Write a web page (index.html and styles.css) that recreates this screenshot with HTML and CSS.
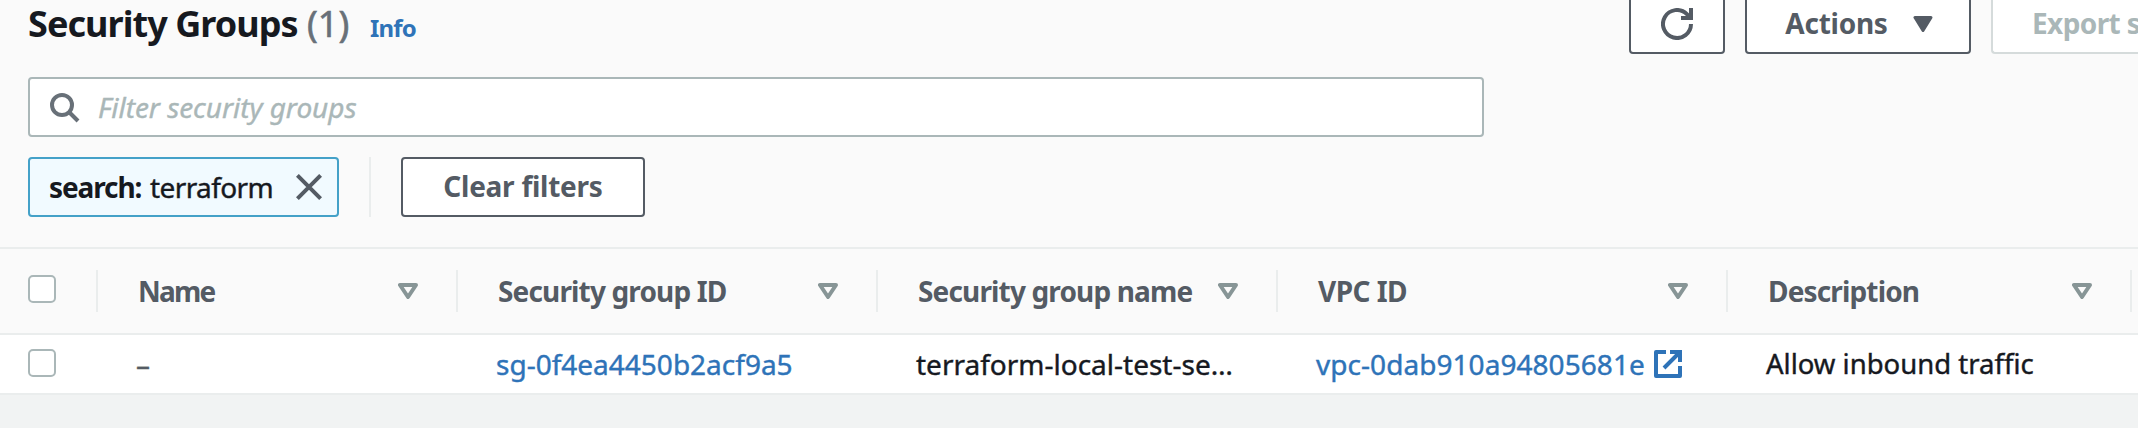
FILE: index.html
```html
<!DOCTYPE html>
<html lang="en">
<head>
<meta charset="utf-8">
<title>Security Groups</title>
<link rel="stylesheet" href="styles.css">
</head>
<body>
<svg class="defs" aria-hidden="true">
  <symbol id="caret" viewBox="0 0 20 16"><path d="M2 2H18L10 14Z" fill="none" stroke="currentColor" stroke-width="4" stroke-linejoin="round"/></symbol>
</svg>
<section class="panel">
  <header class="toolbar">
    <div class="heading">
      <h1 class="title">Security Groups</h1>
      <span class="count">(1)</span>
      <a class="info">Info</a>
    </div>
    <div class="actions">
      <button class="btn btn-refresh" aria-label="Refresh">
        <svg width="32" height="32" viewBox="0 0 32 32" fill="none" stroke="currentColor" stroke-width="4"><path d="M30 16A14 14 0 1 1 25.900 6.100L29 9.500"/><path d="M30 0V10H20"/></svg>
      </button>
      <button class="btn btn-actions"><span class="label-actions">Actions</span>
        <svg width="20" height="16" viewBox="0 0 20 16"><path d="M2 1.500H18L10 14.500Z" fill="currentColor" stroke="currentColor" stroke-width="3" stroke-linejoin="round"/></svg>
      </button>
      <button class="btn btn-export" disabled>Export s</button>
    </div>
  </header>
  <div class="search">
    <svg width="30" height="30" viewBox="0 0 30 30" fill="none" stroke="currentColor" stroke-width="4"><circle cx="12" cy="12" r="10"/><path d="M19 19L28 28"/></svg>
    <span class="placeholder">Filter security groups</span>
  </div>
  <div class="filters">
    <div class="token">
      <b class="token-key">search:</b><span class="token-value">terraform</span>
      <svg width="26" height="26" viewBox="0 0 26 26" fill="none" stroke="currentColor" stroke-width="4"><path d="M1.400 1.400L24.600 24.600M24.600 1.400L1.400 24.600"/></svg>
    </div>
    <div class="separator"></div>
    <button class="btn btn-clear">Clear filters</button>
  </div>
  <div class="row head">
    <div class="cell select"><span class="checkbox"></span></div>
    <div class="cell"><span class="name">Name</span><svg class="caret"><use href="#caret"/></svg></div>
    <div class="cell"><span>Security group ID</span><svg class="caret"><use href="#caret"/></svg></div>
    <div class="cell"><span>Security group name</span><svg class="caret"><use href="#caret"/></svg></div>
    <div class="cell"><span class="vpc">VPC ID</span><svg class="caret"><use href="#caret"/></svg></div>
    <div class="cell"><span>Description</span><svg class="caret"><use href="#caret"/></svg></div>
  </div>
  <div class="row body">
    <div class="cell select"><span class="checkbox"></span></div>
    <div class="cell dash">–</div>
    <div class="cell"><a class="link">sg-0f4ea4450b2acf9a5</a></div>
    <div class="cell">terraform-local-test-se…</div>
    <div class="cell"><a class="link vpc-link">vpc-0dab910a94805681e</a>
      <svg class="external" width="28" height="28" viewBox="0 0 28 28" fill="none" stroke="currentColor" stroke-width="4"><path d="M12 2H2V26H26V16" stroke-linejoin="round"/><path d="M16 2H26V12M25.500 2.500L10 18"/></svg>
    </div>
    <div class="cell description">Allow inbound traffic</div>
  </div>
</section>
</body>
</html>
```
FILE: styles.css
```css
* { box-sizing: border-box; }

body {
  margin: 0;
  height: 428px;
  overflow: hidden;
  background: #f1f3f3;
  color: #16191f;
  font: 28px/40px "Noto Sans", sans-serif;
}

svg { display: block; flex: none; }
.defs { display: none; }

.panel { background: #fafafa; }

.toolbar {
  display: flex;
  justify-content: space-between;
  height: 77px;
  padding-left: 28px;
}

.heading { display: flex; align-items: baseline; height: 48px; line-height: 48px; }
.title { width: 279px; margin: 0; font-size: 36px; font-weight: 700; letter-spacing: -0.95px; white-space: nowrap; }
.count { width: 63px; color: #687078; font-size: 36px; -webkit-text-stroke: 0.6px; }
.info { color: #2e73b8; font-size: 24px; font-weight: 700; letter-spacing: -0.8px; }

.actions { display: flex; gap: 20px; width: 509px; height: 60px; margin-top: -6px; }

.btn {
  display: flex;
  flex: none;
  align-items: center;
  justify-content: center;
  height: 60px;
  padding: 0 0 2px;
  border: 2px solid #545b64;
  border-radius: 4px;
  background: #fff;
  color: #545b64;
  font: 700 28px/40px "Noto Sans", sans-serif;
  letter-spacing: -0.25px;
  white-space: nowrap;
}

.btn-refresh { width: 96px; padding: 0; }
.btn-actions { width: 226px; padding: 0 0 2px 2px; gap: 25px; }
.btn-actions svg { margin-top: 2px; }
.btn-export {
  width: 147px;
  justify-content: flex-start;
  padding-left: 39px;
  border-color: #d5dbdb;
  border-right: 0;
  border-radius: 4px 0 0 4px;
  color: #aab7b8;
  letter-spacing: -0.6px;
}
.btn-clear { width: 244px; }

.search {
  display: flex;
  align-items: center;
  width: 1456px;
  height: 60px;
  margin-left: 28px;
  padding-left: 20px;
  gap: 18px;
  border: 2px solid #aab7b8;
  border-radius: 4px;
  background: #fff;
  color: #687078;
}
.search svg { margin-top: 1px; }
.placeholder { color: #aab7b8; font-style: italic; letter-spacing: -0.05px; -webkit-text-stroke: 0.4px; }

.filters { display: flex; padding: 20px 28px 30px; }
.token {
  display: flex;
  align-items: center;
  width: 311px;
  height: 60px;
  padding: 0 15px 0 19px;
  border: 2px solid #44a1c8;
  border-radius: 4px;
  background: #f1faff;
}
.token-key { width: 101px; letter-spacing: -1.1px; }
.token-value { letter-spacing: -0.6px; -webkit-text-stroke: 0.4px; }
.token svg { margin-left: auto; color: #545b64; }
.separator { width: 2px; margin: 0 30px; background: #eaeded; }

.row { display: grid; grid-template-columns: 98px 360px 420px 400px 450px 404px 1fr; }
.cell { display: flex; align-items: center; min-width: 0; white-space: nowrap; }
.checkbox { width: 28px; height: 28px; border: 2px solid #aab7b8; border-radius: 5px; background: #fff; }
.select { padding-left: 28px; }

.head {
  height: 88px;
  padding: 21px 0;
  border: solid #eaeded;
  border-width: 2px 0;
  color: #545b64;
  font-weight: 700;
  letter-spacing: -0.85px;
}
.head .cell { justify-content: space-between; height: 42px; padding: 0 38px 0 40px; border-right: 2px solid #eaeded; }
.head .select { padding: 0 0 4px 28px; justify-content: flex-start; }
.name { letter-spacing: -1.8px; }
.vpc { letter-spacing: -0.55px; }
.caret { width: 20px; height: 16px; color: #879596; }

.body { height: 60px; border-bottom: 2px solid #eaeded; background: #fff; -webkit-text-stroke: 0.4px; }
.body .cell:not(.select) { padding-left: 38px; }
.body .select { padding-bottom: 2px; }
.body .dash { padding-left: 37px; color: #545b64; }
.link { color: #2e73b8; }
.vpc-link { letter-spacing: 0.05px; }
.external { margin-left: 9px; color: #2e73b8; }
.description { font-size: 27.500px; }
```
